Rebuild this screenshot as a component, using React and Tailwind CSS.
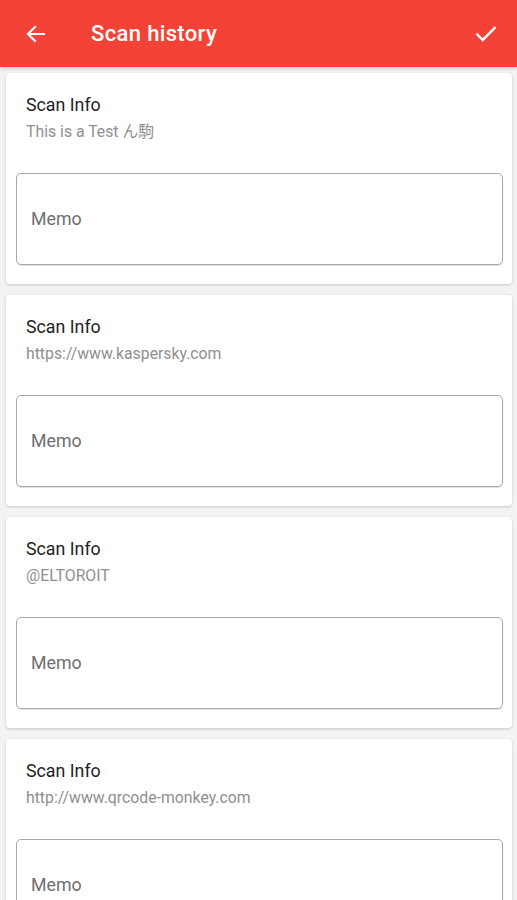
import React from "react";

const items = [
  "This is a Test ん駒",
  "https://www.kaspersky.com",
  "@ELTOROIT",
  "http://www.qrcode-monkey.com",
];

function Card({ sub }) {
  return (
    <div className="bg-white rounded-[4px] shadow-[0_1px_3px_rgba(0,0,0,0.18)] h-[211px] shrink-0 flex flex-col">
      <div className="pl-[20px] pt-[21px] text-[17.8px] leading-[22px] text-[#222]">Scan Info</div>
      <div className="pl-[20px] pt-[6px] text-[15.8px] leading-[20px] text-[#8f8f8f]">{sub}</div>
      <div className="ml-[10px] mr-[9px] mt-[31px] h-[92px] border border-[#a8a8a8] rounded-[5px] shadow-[0_1px_1px_rgba(0,0,0,0.12)] flex items-center pl-[14px]">
        <span className="text-[17.8px] text-[#6f6f6f]">Memo</span>
      </div>
    </div>
  );
}

export default function App() {
  return (
    <div
      className="w-[517px] h-[900px] overflow-hidden bg-[#f3f3f3] flex flex-col"
      style={{ fontFamily: "Roboto, 'Noto Sans CJK JP', sans-serif" }}
    >
      <div className="h-[67px] bg-[#f44336] flex items-center shrink-0 shadow-[0_2px_3px_rgba(0,0,0,0.15)] relative z-10">
        <svg width="24" height="24" viewBox="0 0 24 24" className="ml-[24px]" fill="none" stroke="white" strokeWidth="2.2" strokeLinecap="square">
          <path d="M20 12H5M11 5l-7 7 7 7" />
        </svg>
        <div className="ml-[43px] text-white text-[22px] font-medium tracking-[0.35px]">Scan history</div>
        <svg width="26" height="26" viewBox="0 0 24 24" className="ml-auto mr-[18px]" fill="none" stroke="white" strokeWidth="2.2" strokeLinecap="square">
          <path d="M4 12.5l5 5L20 6.5" />
        </svg>
      </div>
      <div className="flex flex-col gap-[11px] pl-[6px] pr-[5px] pt-[6px]">
        {items.map((s, i) => (
          <Card key={i} sub={s} />
        ))}
      </div>
    </div>
  );
}
